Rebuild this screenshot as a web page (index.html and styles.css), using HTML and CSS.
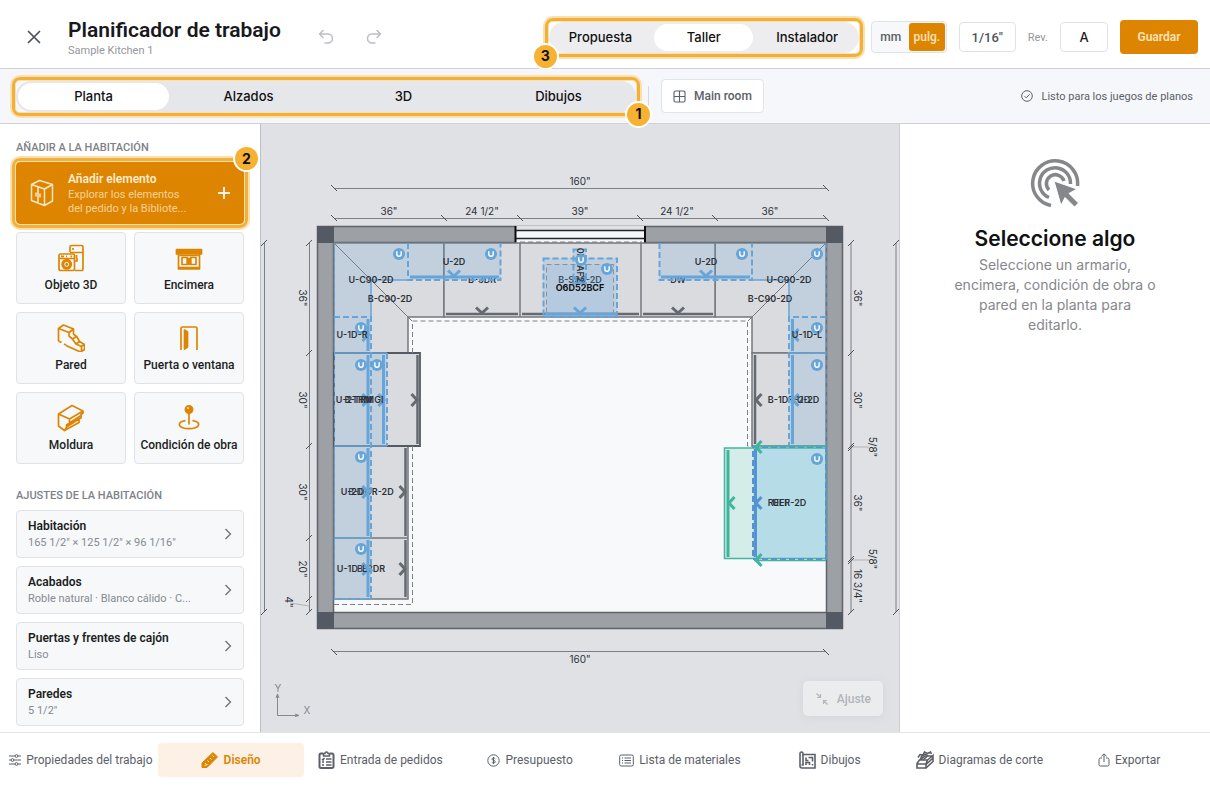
FILE: index.html
```html
<!DOCTYPE html>
<html lang="es">
<head>
<meta charset="utf-8">
<title>Planificador de trabajo</title>
<link rel="stylesheet" href="styles.css">
</head>
<body>
<header class="header">
  <button class="icon-btn close" aria-label="Cerrar"><svg width="14" height="14" viewBox="0 0 14 14"><path d="M1.500 1.500l11 11M12.500 1.500l-11 11" stroke="#4a4f57" stroke-width="1.700" fill="none" stroke-linecap="round"/></svg></button>
  <div class="titles">
    <h1>Planificador de trabajo</h1>
    <p>Sample Kitchen 1</p>
  </div>
  <div class="history">
    <button class="icon-btn" aria-label="Deshacer"><svg width="16" height="16" viewBox="0 0 16 16"><path d="M5 1.500L1.500 5 5 8.500M1.500 5H10a4.500 4.500 0 0 1 0 9H7" /></svg></button>
    <button class="icon-btn" aria-label="Rehacer"><svg width="16" height="16" viewBox="0 0 16 16"><path d="M11 1.500L14.500 5 11 8.500M14.500 5H6a4.500 4.500 0 0 0 0 9h3"/></svg></button>
  </div>
  <div class="callout-host audience">
    <div class="segmented neutral">
      <button>Propuesta</button><button class="active">Taller</button><button>Instalador</button>
    </div>
    <span class="callout"></span><span class="badge badge-left">3</span>
  </div>
  <div class="units"><button>mm</button><button class="active">pulg.</button></div>
  <button class="field precision">1/16"</button>
  <label class="rev" for="rev">Rev.</label>
  <input class="field rev-input" id="rev" value="A">
  <button class="save">Guardar</button>
</header>

<div class="toolbar">
  <div class="callout-host views">
    <div class="segmented">
      <button class="active">Planta</button><button>Alzados</button><button>3D</button><button>Dibujos</button>
    </div>
    <span class="callout"></span><span class="badge badge-right">1</span>
  </div>
  <span class="divider"></span>
  <button class="room"><svg width="13" height="13" viewBox="0 0 13 13"><path d="M2.500 1h8A1.500 1.500 0 0 1 12 2.500v8a1.500 1.500 0 0 1-1.500 1.500h-8A1.500 1.500 0 0 1 1 10.500v-8A1.500 1.500 0 0 1 2.500 1zM6.500 1v11M1 6.500h11" fill="none" stroke="#5b6068" stroke-width="1.100"/></svg>Main room</button>
  <div class="ready"><svg width="12" height="12" viewBox="0 0 12 12" fill="none" stroke="#5b6068"><circle cx="6" cy="6" r="5.300"/><path d="M3.600 6.200l1.700 1.700 3.200-3.600"/></svg>Listo para los juegos de planos</div>
</div>

<main class="main">
  <aside class="sidebar">
    <h2>AÑADIR A LA HABITACIÓN</h2>
    <div class="callout-host">
      <button class="add">
        <svg width="24" height="28" viewBox="0 0 24 28" fill="none" stroke="#fbe6c4" stroke-width="1.500" stroke-linejoin="round"><path d="M1.500 5.500L9.500 1.500l13 4-8 4.500zM1.500 5.500v16L14.500 26.500V10M22.500 5.500v16.500L14.500 26.500M8 8v16M6 13.500v4M10 14.500v4"/></svg>
        <span class="add-text"><strong>Añadir elemento</strong><span>Explorar los elementos<br>del pedido y la Bibliote...</span></span>
        <svg width="12" height="12" viewBox="0 0 12 12"><path d="M6 0v12M0 6h12" stroke="#fdf0dc" stroke-width="2"/></svg>
      </button>
      <span class="callout"></span><span class="badge badge-top">2</span>
    </div>
    <div class="tiles">
      <button class="tile"><svg viewBox="0 0 28 28"><path d="M13 8V3A1.500 1.500 0 0 1 14.500 1.500h10A1.500 1.500 0 0 1 26 3v22a1.500 1.500 0 0 1-1.500 1.500H18M13 8.500h13" /><path d="M16 4v2M19.500 11v3" /><rect x="2" y="10" width="15.500" height="16.500" rx="1.500"/><path d="M2 14.500h15M4 12.300h3M9 12.300h1M13.500 12.300h1.500"/><circle cx="9.700" cy="20.300" r="4.600" fill="#dd8500"/><circle cx="9.700" cy="20.300" r="2" stroke="#f6f8fa" stroke-width="1"/><path d="M17.500 17h2.500v-3"/></svg>Objeto 3D</button>
      <button class="tile"><svg viewBox="0 0 28 28"><path d="M1.500 5.500h25v4.500h-25z" fill="#dd8500"/><path d="M3.500 10v15h21V10M3.500 23.500h21M4.500 11.500h19M7 13.500h5.500v7H7zM15.500 13.500H21v7h-5.500z"/><path d="M13 14v7M15 14v7" stroke-width="3"/></svg>Encimera</button>
      <button class="tile"><svg viewBox="0 0 28 28"><path d="M1.500 17V4.500L6.500 1l10 4v5l3.500 3 2.500 4.500 5 3v5l-4 2.500L9 21.500M1.500 4.500l10.500 4 4.500-3.500M12 8.500v3.500l3.500 3 3.500 5 5.500 2.500v5M15.500 15l4-2.500M19 20l3.500-2.500M24 22.500l3.500-2M1.500 17l3 1.500M7 20l2 1"/></svg>Pared</button>
      <button class="tile"><svg viewBox="0 0 28 28"><path d="M6 26V4.500a1.500 1.500 0 0 1 1.500-1.500h13A1.500 1.500 0 0 1 22 4.500V26"/><path d="M9.500 6l3 2v15l-3 2z" fill="#dd8500"/></svg>Puerta o ventana</button>
      <button class="tile"><svg viewBox="0 0 28 28"><path d="M1.500 10L15 1.500 26 7 12.500 15zM1.500 10v12l6 4.500 2-3V21l3-2v-4M26 7v2l-2 1.500V14l-2 1v3.500L7.500 26.500M12.500 19L24 11.500M9.500 23L22 15"/></svg>Moldura</button>
      <button class="tile"><svg viewBox="0 0 28 28"><circle cx="14" cy="5.500" r="3.600" fill="#dd8500"/><path d="M12.500 4.500l1-1" stroke="#fff"/><path d="M14 9v11.500M10.500 16.700C6.800 17.200 4.300 18.700 4.300 20.500c0 2.300 4.300 4.200 9.700 4.200s9.700-1.900 9.700-4.200c0-1.800-2.500-3.300-6.200-3.800"/></svg>Condición de obra</button>
    </div>
    <h2 class="second">AJUSTES DE LA HABITACIÓN</h2>
    <div class="settings">
      <button class="setting"><span><strong>Habitación</strong><small>165 1/2" × 125 1/2" × 96 1/16"</small></span><svg width="8" height="12" viewBox="0 0 8 12"><path d="M1.500 1l5 5-5 5"/></svg></button>
      <button class="setting"><span><strong>Acabados</strong><small>Roble natural · Blanco cálido · C...</small></span><svg width="8" height="12" viewBox="0 0 8 12"><path d="M1.500 1l5 5-5 5"/></svg></button>
      <button class="setting"><span><strong>Puertas y frentes de cajón</strong><small>Liso</small></span><svg width="8" height="12" viewBox="0 0 8 12"><path d="M1.500 1l5 5-5 5"/></svg></button>
      <button class="setting"><span><strong>Paredes</strong><small>5 1/2"</small></span><svg width="8" height="12" viewBox="0 0 8 12"><path d="M1.500 1l5 5-5 5"/></svg></button>
    </div>
  </aside>

  <section class="canvas">
    <svg class="plan" viewBox="261 124 638 608">
      <defs>
        <g id="u"><circle r="6" fill="#67a4d8"/><path d="M-2.200-2.800v2.900a2.200 2.200 0 0 0 4.400 0V-2.800" fill="none" stroke="#fff" stroke-width="1.400"/></g>
        <path id="down" d="M-6-5.500L0 0l6-5.500" fill="none" stroke-width="3"/>
        <path id="right" d="M-5.500-6L0 0l-5.500 6" fill="none" stroke-width="3"/>
        <path id="left" d="M5.500-6L0 0l5.500 6" fill="none" stroke-width="3"/>
        <path id="tb" d="M-3-3l6 6" stroke="#4f545b"/>
        <path id="tf" d="M-3 3l6-6" stroke="#4f545b"/>
      </defs>
      <!-- Room -->
      <path d="M317 226h526v403H317z" fill="#9da0a4"/>
      <path d="M334 243h492v369H334z" fill="#f7f9fb"/>
      <path d="M317.500 226.500h525v402h-525zM333.500 242.500h493v370h-493z" fill="none" stroke="#5f646c" stroke-width="1.500"/>
      <path d="M317 226h17v17h-17zM826 226h17v17h-17zM317 612h17v17h-17zM826 612h17v17h-17z" fill="#535a64"/>
      <path d="M516 226h129v17H516z" fill="#f5f6f8"/>
      <path d="M516 226h129v4H516z" fill="#e0e1e5"/>
      <path d="M516 230.500h129M516 238.500h129" stroke="#22252a" stroke-width="1.300"/>
      <path d="M515.500 226v17M645 226v17" stroke="#0b0c0e" stroke-width="2"/>
      <!-- Base cabinets -->
      <g fill="#dadbde" stroke="#74787f" stroke-width="1.500">
        <path d="M334 243h110v74h-36v36h-74zM826 243H715v74h37v36h74z"/>
        <path d="M444 243h76v74h-76zM520 243h121v74H520zM641 243h74v74h-74z"/>
        <path d="M334 446h74v92h-74zM334 538h74v61h-74zM752 353h74v93h-74z"/>
        <path d="M334 353h86v93h-86z" stroke="#555a62" stroke-width="1.800"/>
        <path d="M334 243l78 78M826 243l-78 78" stroke-width="1" fill="none"/>
      </g>
      <path d="M446 314h72M522 314h117M643 314h70M405.500 448v88M405.500 540v57M755 355v89M417.500 355v89" stroke="#656a72" stroke-width="2.500"/>
      <g stroke="#656a72"><use href="#down" x="482" y="313"/><use href="#down" x="678" y="313"/><use href="#right" x="405" y="492"/><use href="#right" x="405" y="569"/><use href="#right" x="417" y="400"/><use href="#left" x="756" y="400"/></g>
      <path d="M334 604.500h78.500V446M412.500 353v-32h335v125h5M520 242h122" fill="none" stroke="#7c8087" stroke-dasharray="5 3"/>
      <g class="cab">
        <text x="482" y="283">B-3DR</text><text x="678" y="283">DW</text>
        <text x="580" y="283">B-S36-2D</text>
        <text x="371" y="495">B-DOR-2D</text><text x="371" y="572">B-3DR</text>
        <text x="789" y="403">B-1DR-2D</text>
      </g>
      <!-- Upper cabinets -->
      <g fill="#5ba6df" fill-opacity=".19" stroke="none">
        <path d="M334 243h74v37h-37v37h-37zM408 243h93v37h-93zM826 243h-74v37h37v37h37zM659 243h93v37h-93z"/>
        <path d="M334 317h37v36h-37zM334 353h37v93h-37zM334 353h53v93h-53zM334 446h37v92h-37zM334 538h37v61h-37z"/>
        <path d="M789 317h37v36h-37zM789 353h37v93h-37zM543 258h74v59h-74zM573 249h13v35h-13z"/>
      </g>
      <path d="M546.500 264.500h67v49h-67z" fill="#5ba6df" fill-opacity=".12" stroke="#8b9098" stroke-dasharray="5 3"/>
      <path d="M408 280h-37v37M752 280h37v37M334 446h53M334 538h37M334 353h53M789 353h37" fill="none" stroke="#67a4d8" stroke-width="1.500"/>
      <path d="M410 277h89M661 277h89M368 319v32M368 355v89M383.500 355v89M368 448v88M368 540v57M792.500 319v32M792.500 355v89M545 314h71" fill="none" stroke="#67a4d8" stroke-width="3"/>
      <path d="M408 243v37h92.500v-37M659.500 243v37H752v-37M334 317h37v282h-37M387 353v93M826 317h-37v129M543.500 258.500h73.500v58.500h-73.500zM573.500 249.500h12.500v34h-12.500z" fill="none" stroke="#67a4d8" stroke-width="2" stroke-dasharray="6 3"/>
      <path d="M334.500 243v356M826 243v204" stroke="#67a4d8" stroke-dasharray="5 4"/>
      <g stroke="#67a4d8"><use href="#down" x="454" y="276"/><use href="#down" x="706" y="276"/><use href="#down" x="580" y="313"/><use href="#right" x="368" y="335"/><use href="#right" x="368" y="400"/><use href="#right" x="384" y="400"/><use href="#right" x="368" y="492"/><use href="#right" x="368" y="569"/><use href="#left" x="793" y="335"/><use href="#left" x="793" y="400"/><use href="#down" x="580" y="283"/></g>
      <!-- Refrigerator -->
      <path d="M724.500 448h101.500v110.500H724.500z" fill="#3fb59d" fill-opacity=".18" stroke="#45b59f" stroke-width="1.500"/>
      <path d="M753 447h73v112h-73z" fill="#5bb0e5" fill-opacity=".25" stroke="#5594d0" stroke-width="2" stroke-dasharray="6 3"/>
      <path d="M754 560.500h72M754 446h72" stroke="#45b59f" stroke-width="1.500"/>
      <path d="M728 450v107" stroke="#3fb59d" stroke-width="3"/>
      <path d="M755.500 449v108" stroke="#5594d0" stroke-width="3"/>
      <g stroke="#3fb59d"><use href="#left" x="729" y="503"/><use href="#left" x="756" y="447"/><use href="#left" x="756" y="560"/></g>
      <use href="#left" x="756" y="503" stroke="#5594d0"/>
      <g class="cab"><text transform="translate(577 265) rotate(90)">0F4AF2</text></g>
      <use href="#u" x="399" y="254"/><use href="#u" x="491" y="254"/><use href="#u" x="742" y="254"/><use href="#u" x="817" y="254"/><use href="#u" x="361" y="328"/><use href="#u" x="817" y="328"/><use href="#u" x="361" y="365"/><use href="#u" x="377" y="365"/><use href="#u" x="817" y="365"/><use href="#u" x="361" y="457"/><use href="#u" x="361" y="549"/><use href="#u" x="817" y="459"/><use href="#u" x="607" y="269"/><use href="#u" x="581" y="260"/>
      <g class="cab">
        <text x="371" y="283">U-C90-2D</text><text x="390" y="302">B-C90-2D</text>
        <text x="789" y="283">U-C90-2D</text><text x="770" y="302">B-C90-2D</text>
        <text x="352" y="338">U-1D-R</text><text x="807" y="338">U-1D-L</text>
        <text x="454" y="265">U-2D</text><text x="706" y="265">U-2D</text><text x="352" y="495">U-2D</text>
        <text x="352" y="572">U-1D-L</text><text x="808" y="403">U-2D</text>
        <text x="354" y="403">U-2TRM</text><text x="364" y="403">B-TRMGI</text>
        <text x="787" y="506">REFR-2D</text><text x="781" y="506">UEF</text>
        <text class="strong" x="580" y="291">O6D52BCF</text>
      </g>
      <!-- Dimensions -->
      <path d="M334 188.500h492M334 218.500h492M334 651.500h492M309.500 243v369M264.500 243v369M851 243v369M896 243v369" fill="none" stroke="#7b7f86"/>
      <path d="M290 603l19 3M851 447h18M851 560h18" fill="none" stroke="#b0b3b8"/>
      <use href="#tb" x="334" y="188"/><use href="#tb" x="826" y="188"/><use href="#tb" x="334" y="218"/><use href="#tb" x="444" y="218"/><use href="#tb" x="520" y="218"/><use href="#tb" x="640" y="218"/><use href="#tb" x="715" y="218"/><use href="#tb" x="826" y="218"/><use href="#tb" x="334" y="652"/><use href="#tb" x="826" y="652"/>
      <use href="#tf" x="309" y="243"/><use href="#tf" x="309" y="353"/><use href="#tf" x="309" y="446"/><use href="#tf" x="309" y="538"/><use href="#tf" x="309" y="599"/><use href="#tf" x="309" y="612"/><use href="#tf" x="264" y="243"/><use href="#tf" x="264" y="612"/>
      <use href="#tf" x="851" y="243"/><use href="#tf" x="851" y="353"/><use href="#tf" x="851" y="446"/><use href="#tf" x="851" y="448"/><use href="#tf" x="851" y="559"/><use href="#tf" x="851" y="561"/><use href="#tf" x="851" y="612"/><use href="#tf" x="896" y="243"/><use href="#tf" x="896" y="612"/>
      <g class="dim">
        <text x="580" y="185">160"</text><text x="580" y="663">160"</text>
        <text x="389" y="215">36"</text><text x="482" y="215">24 1/2"</text><text x="580" y="215">39"</text><text x="677" y="215">24 1/2"</text><text x="770" y="215">36"</text>
        <text transform="translate(299 298) rotate(90)">36"</text><text transform="translate(299 400) rotate(90)">30"</text><text transform="translate(299 492) rotate(90)">30"</text><text transform="translate(299 569) rotate(90)">20"</text><text transform="translate(285 602) rotate(90)">4"</text>
        <text transform="translate(854 298) rotate(90)">36"</text><text transform="translate(854 400) rotate(90)">30"</text><text transform="translate(854 503) rotate(90)">36"</text><text transform="translate(854 586) rotate(90)">16 3/4"</text><text transform="translate(869 447) rotate(90)">5/8"</text><text transform="translate(869 559) rotate(90)">5/8"</text>
      </g>
      <!-- Axes -->
      <path d="M277.500 694v21.500H299M276 698l1.500-4 1.500 4M295 714l4 1.500-4 1" fill="none" stroke="#85898f"/>
      <g class="axis"><text x="278" y="692">Y</text><text x="307" y="714">X</text></g>
    </svg>
    <button class="fit"><svg width="14" height="14" viewBox="0 0 14 14" fill="none" stroke="#b4b7bc" stroke-width="1.200"><path d="M1.500 1.500L5.500 5.500M5.500 2v3.500H2M12.500 12.500l-4-4M8.500 12V8.500H12"/></svg>Ajuste</button>
  </section>

  <aside class="panel">
    <svg width="50" height="50" viewBox="0 0 50 50"><g fill="none" stroke="#85878b" stroke-width="3.500"><path d="M21 47.500A22.500 22.500 0 1 1 47.500 28"/><path d="M19 39.500A15.500 15.500 0 1 1 40.500 26"/><path d="M19 32A9 9 0 1 1 34 23"/></g><path d="M24 23l23 8-8 4.500 9.500 9.500-4 4-9.500-9.500-4 8z" fill="#85878b" stroke="#fff" stroke-width="1"/></svg>
    <h3>Seleccione algo</h3>
    <p>Seleccione un armario, encimera, condición de obra o pared en la planta para editarlo.</p>
  </aside>
</main>

<nav class="footer">
  <a href="#"><svg width="12" height="12" viewBox="0 0 12 12"><path d="M0 2h6M9 2h3M0 6h2M5 6h7M0 10h6M9 10h3"/><circle cx="7.500" cy="2" r="1.400"/><circle cx="3.500" cy="6" r="1.400"/><circle cx="7.500" cy="10" r="1.400"/></svg>Propiedades del trabajo</a>
  <a href="#" class="active"><svg width="18" height="18" viewBox="0 0 18 18"><path d="M1 12L12 1.500l4.500 4.500L6 16.500H1z" fill="#dd8500" stroke="#dd8500" stroke-linejoin="round"/><path d="M4 12l1.500 1.500M6.500 9.500L8 11M9 7l1.500 1.500M11.500 4.500L13 6M3.500 14.500l3-1" stroke="#fcf1e4"/></svg>Diseño</a>
  <a href="#"><svg width="17" height="18" viewBox="0 0 17 18"><path d="M5 2.500H3A1.500 1.500 0 0 0 1.500 4v11.500A1.500 1.500 0 0 0 3 17h11a1.500 1.500 0 0 0 1.500-1.500V4A1.500 1.500 0 0 0 14 2.500h-2" stroke-width="2"/><path d="M5.500 5V2.500h1.500a1.500 1.500 0 0 1 3 0h1.500V5z" stroke-width="1.500"/><path d="M4 8l1 1 1.500-2M8 8h5.500M4 11h2M8 11h5.500M4 14h2M8 14h5.500" stroke-width="1.500"/></svg>Entrada de pedidos</a>
  <a href="#"><svg width="13" height="13" viewBox="0 0 13 13"><circle cx="6.500" cy="6.500" r="5.700"/><path d="M8.300 4.800C7.800 3.700 5 3.700 5 5.200c0 1.600 3.300.9 3.300 2.600 0 1.500-3 1.500-3.600.3M6.500 3v7"/></svg>Presupuesto</a>
  <a href="#"><svg width="15" height="13" viewBox="0 0 15 13"><rect x=".7" y="1" width="13.600" height="11" rx="1.500"/><path d="M3 4h1M5.500 4H12M3 6.500h1M5.500 6.500H12M3 9h1M5.500 9H12"/></svg>Lista de materiales</a>
  <a href="#"><svg width="17" height="18" viewBox="0 0 17 18"><path d="M4 3.500h12V17H3a2 2 0 0 1-2-2V2.500a1.500 1.500 0 0 1 3 0V14H2.500M7 6.500v3h2.500M7 14v-2.500h3.500V14M9.500 6.500h4v4M13.500 13v1.500" stroke-width="1.600"/></svg>Dibujos</a>
  <a href="#"><svg width="18" height="18" viewBox="0 0 18 18"><path d="M1 12.500L3.500 9h8l-1.500 4v4H1zM11.500 9L17 4.500v6L10 17M1 13h9.500L17 7M3.500 9L9 5h8M2 6.500l2-3 3 .5L8.500 1l3 1.500L14.500 1l1 2" stroke-width="1.600"/><path d="M5 8a4 4 0 0 1 7-3M7 9l4-3.500" stroke-width="1.600"/></svg>Diagramas de corte</a>
  <a href="#"><svg width="12" height="14" viewBox="0 0 12 14"><path d="M4 5H2.500A1.500 1.500 0 0 0 1 6.500v5A1.500 1.500 0 0 0 2.500 13h7a1.500 1.500 0 0 0 1.500-1.500v-5A1.500 1.500 0 0 0 9.500 5H8M6 9V1M3.500 3.200L6 .8l2.500 2.400"/></svg>Exportar</a>
</nav>
</body>
</html>
```
FILE: styles.css
```css
* { box-sizing: border-box; }
body {
  margin: 0;
  height: 100vh;
  display: flex;
  flex-direction: column;
  overflow: hidden;
  background: #fff;
  color: #1c1e22;
  font-family: Roboto, "Liberation Sans", sans-serif;
  font-size: 12px;
}
button, input { font: inherit; color: inherit; border: 0; background: none; padding: 0; margin: 0; }
h1, h2, h3, p { margin: 0; }
svg { flex: none; }

/* Header */
.header {
  display: flex;
  align-items: center;
  height: 69px;
  padding: 6px 12px 0 20px;
  border-bottom: 1px solid #cfd1d7;
  flex: none;
}
.icon-btn { display: grid; place-items: center; width: 28px; height: 28px; }
.titles { margin: 2px 0 0 20px; width: 244px; }
.titles h1 { font-size: 21px; line-height: 26px; font-weight: 600; color: #17191d; white-space: nowrap; }
.titles p { font-size: 11px; line-height: 16px; color: #94979d; }
.history { display: flex; gap: 20px; }
.history path { fill: none; stroke: #bcbec3; stroke-width: 1.5; stroke-linecap: round; stroke-linejoin: round; }
.callout-host { position: relative; }
.audience { margin-left: auto; width: 310px; }
.segmented {
  display: grid;
  grid-auto-flow: column;
  grid-auto-columns: 1fr;
  height: 31px;
  padding: 2px 0;
  border-radius: 16px;
  background: #e6e7eb;
  font: 500 13px/1 Inter, sans-serif;
  color: #111;
}
.segmented.neutral { background: #ededef; }
.segmented .active { margin: 0 2px; background: #fff; border-radius: 14px; }
.callout {
  position: absolute;
  inset: -4px;
  border: 3px solid #f2b03a;
  border-radius: 8px;
  box-shadow: 0 0 0 2px #fae0ae, inset 0 0 0 1px #fae0ae;
  pointer-events: none;
}
.badge {
  position: absolute;
  width: 27px;
  height: 27px;
  border: 2px solid #fff;
  border-radius: 50%;
  background: #f8b233;
  color: #111;
  display: grid;
  place-items: center;
  font: 700 14px/1 Inter, sans-serif;
}
.badge-left { left: -17px; bottom: -17px; }
.badge-right { right: -16px; bottom: -16px; }
.badge-top { right: -16px; top: -17px; }
.units {
  display: flex;
  height: 32px;
  margin-left: 12px;
  padding: 1px;
  border: 1px solid #e0e2e6;
  border-radius: 4px;
  background: #f6f8fa;
  font-weight: 500;
  color: #5b6068;
}
.units button { width: 36px; }
.units .active { background: #dd8500; color: #fbe3bd; border-radius: 3px; }
.field { height: 30px; border: 1px solid #e0e2e6; border-radius: 4px; background: #fff; text-align: center; }
.precision { width: 57px; margin-left: 12px; font-size: 13px; font-weight: 500; color: #4f545b; }
.rev { margin: 0 12px; font-size: 11px; color: #94979d; }
.rev-input { width: 48px; font: 500 13px Inter, sans-serif; }
.save { width: 78px; height: 34px; margin-left: 12px; border-radius: 4px; background: #dd8500; color: #fbe3bd; font-weight: 600; }

/* View toolbar */
.toolbar {
  display: flex;
  align-items: center;
  height: 55px;
  padding: 0 17px 0 16px;
  background: #f6f7fa;
  border-bottom: 1px solid #cfd1d7;
  flex: none;
  z-index: 2;
}
.views { width: 620px; }
.divider { width: 1px; height: 20px; margin: 0 12px; background: #d5d8dd; }
.room {
  display: flex;
  align-items: center;
  gap: 8px;
  height: 34px;
  padding: 0 11px;
  border: 1px solid #e2e4e8;
  border-radius: 4px;
  background: #fff;
  color: #5b6068;
  font-weight: 500;
}
.ready { display: flex; align-items: center; gap: 8px; margin-left: auto; font-size: 11px; color: #5b6068; }

/* Main */
.main { display: grid; grid-template-columns: 261px minmax(0, 1fr) 311px; flex: 1; min-height: 0; }
.sidebar { padding: 16px; border-right: 1px solid #bcbfc6; min-height: 0; }
.sidebar h2 { font-size: 11px; line-height: 15px; font-weight: 500; color: #7d8188; }
.sidebar .callout-host { margin-top: 7px; }
.add {
  display: flex;
  align-items: center;
  width: 100%;
  height: 62px;
  padding: 0 14px;
  border-radius: 4px;
  background: #dd8500;
  color: #f7d199;
  text-align: left;
}
.add-text { flex: 1; margin-left: 14px; font-size: 11px; line-height: 14px; }
.add-text strong { display: block; font-size: 12px; line-height: 18px; font-weight: 600; color: #fdeccf; }
.tiles { display: grid; grid-template-columns: 1fr 1fr; gap: 8px; margin-top: 8px; }
.tile, .setting { border: 1px solid #e0e2e6; border-radius: 4px; background: #f6f8fa; }
.tile {
  display: flex;
  flex-direction: column;
  align-items: center;
  justify-content: center;
  gap: 6px;
  height: 72px;
  font-weight: 500;
  white-space: nowrap;
}
.tile svg { width: 28px; height: 28px; fill: none; stroke: #dd8500; stroke-width: 1.7; stroke-linejoin: round; }
.sidebar .second { margin: 24px 0 7px; }
.settings { display: grid; gap: 8px; }
.setting { display: flex; align-items: center; justify-content: space-between; height: 48px; padding: 0 11px; text-align: left; }
.setting strong, .setting small { display: block; }
.setting strong { font-size: 12px; line-height: 18px; font-weight: 600; }
.setting small { font-size: 11px; line-height: 16px; color: #868a91; }
.setting path { fill: none; stroke: #6d7178; stroke-width: 1.3; }

/* Plan */
.canvas { position: relative; background: #e0e1e5; min-height: 0; }
.plan { display: block; width: 100%; height: 100%; }
.plan text { text-anchor: middle; font-family: Inter, sans-serif; }
.cab text { font-size: 9px; font-weight: 600; fill: #2e3238; }
.cab .strong { font-weight: 700; fill: #111; }
.dim text { font-size: 10px; font-weight: 400; fill: #2e3238; }
.axis text { font-size: 10px; fill: #85898f; }
.fit {
  position: absolute;
  right: 16px;
  bottom: 16px;
  display: flex;
  align-items: center;
  gap: 8px;
  height: 35px;
  padding: 0 12px;
  border-radius: 5px;
  background: #ebecee;
  color: #b1b4b9;
  font-weight: 500;
  box-shadow: 0 1px 8px #d2d4d8;
}
.panel { border-left: 1px solid #c9ccd2; padding: 34px 52px; text-align: center; font-family: Inter, sans-serif; }
.panel h3 { margin-top: 14px; font-size: 21px; line-height: 28px; font-weight: 600; color: #0f1012; }
.panel p { margin-top: 2px; font-size: 14px; line-height: 20px; color: #85878b; }

/* Footer */
.footer {
  display: grid;
  grid-template-columns: repeat(8, minmax(0, 1fr));
  gap: 4px;
  height: 76px;
  padding: 10px 8px;
  border-top: 1px solid #e2e4e8;
  flex: none;
}
.footer a {
  display: flex;
  align-items: center;
  justify-content: center;
  gap: 5px;
  height: 34px;
  border-radius: 4px;
  color: #5b6068;
  text-decoration: none;
  white-space: nowrap;
}
.footer svg { fill: none; stroke: #5b6068; }
.footer .active { background: #fcf1e4; color: #dd8500; font-weight: 600; }
```
